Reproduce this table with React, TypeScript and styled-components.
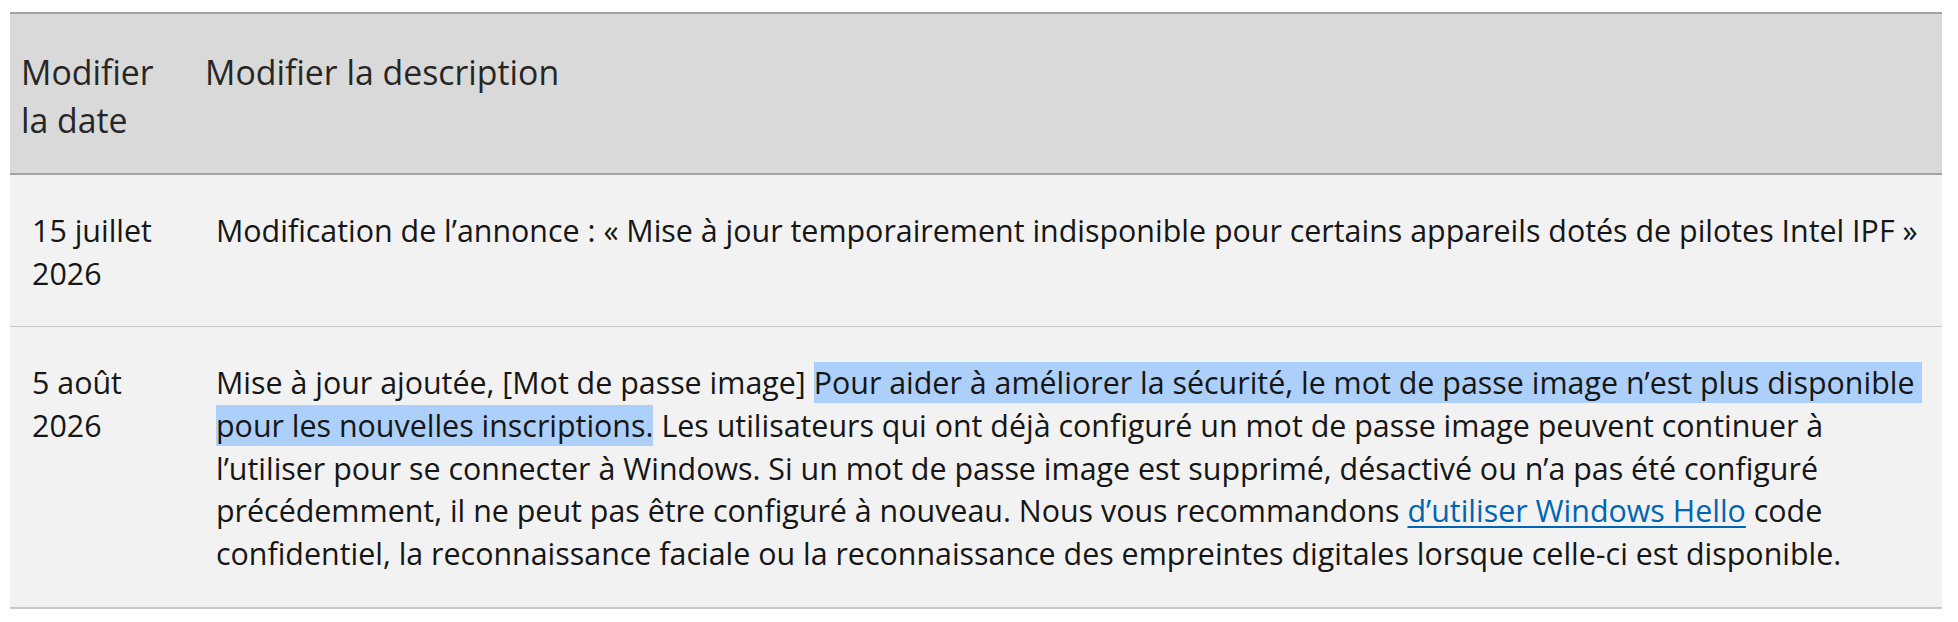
import React from "react";
import styled, { createGlobalStyle } from "styled-components";

const GlobalStyle = createGlobalStyle`
  body {
    margin: 0;
    background: #ffffff;
    font-family: "Open Sans", "Noto Sans", sans-serif;
    color: #161616;
  }
`;

const Page = styled.div`
  padding: 12px 0 0 10px;
`;

const Table = styled.table`
  width: 1932px;
  table-layout: fixed;
  border-collapse: collapse;
`;

const Col = styled.col<{ width?: string }>`
  width: ${(props) => props.width};
`;

const HeadCell = styled.th`
  background: #d9d9d9;
  border-top: 2px solid #a3a3a3;
  border-bottom: 2px solid #a3a3a3;
  padding: 34px 12px 29px 11px;
  font-size: 33.8px;
  line-height: 48px;
  font-weight: 400;
  color: #262626;
  text-align: left;
  vertical-align: top;
`;

const Row = styled.tr<{ last?: boolean }>`
  background: #f2f2f2;
  border-bottom: ${(props) => (props.last ? "2px" : "1px")} solid #c8c8c8;
`;

const Cell = styled.td<{ nowrap?: boolean }>`
  padding: 35px 22px 31px 22px;
  font-size: 30.4px;
  line-height: 42.67px;
  vertical-align: top;
  white-space: ${(props) => (props.nowrap ? "nowrap" : "normal")};
`;

const Selected = styled.span`
  background: #acd0f9;
`;

const Link = styled.a`
  color: #0065b3;
  text-decoration: underline;
  text-decoration-thickness: 2px;
  text-underline-offset: 4px;
`;

function App() {
  return (
    <Page>
      <GlobalStyle />
      <Table>
        <colgroup>
          <Col width="184px" />
          <Col />
        </colgroup>
        <thead>
          <tr>
            <HeadCell>Modifier la date</HeadCell>
            <HeadCell>Modifier la description</HeadCell>
          </tr>
        </thead>
        <tbody>
          <Row>
            <Cell>15 juillet 2026</Cell>
            <Cell nowrap>
              Modification de l’annonce : « Mise à jour temporairement
              indisponible pour certains appareils dotés de pilotes Intel IPF »
            </Cell>
          </Row>
          <Row last>
            <Cell>5 août 2026</Cell>
            <Cell nowrap>
              Mise à jour ajoutée, [Mot de passe image]{" "}
              <Selected>
                Pour aider à améliorer la sécurité, le mot de passe image n’est
                plus disponible&nbsp;
                <br />
                pour les nouvelles inscriptions.
              </Selected>{" "}
              Les utilisateurs qui ont déjà configuré un mot de passe image
              peuvent continuer à
              <br />
              l’utiliser pour se connecter à Windows. Si un mot de passe image
              est supprimé, désactivé ou n’a pas été configuré
              <br />
              précédemment, il ne peut pas être configuré à nouveau. Nous vous
              recommandons <Link href="#">d’utiliser Windows Hello</Link> code
              <br />
              confidentiel, la reconnaissance faciale ou la reconnaissance des
              empreintes digitales lorsque celle-ci est disponible.
            </Cell>
          </Row>
        </tbody>
      </Table>
    </Page>
  );
}

export default App;
